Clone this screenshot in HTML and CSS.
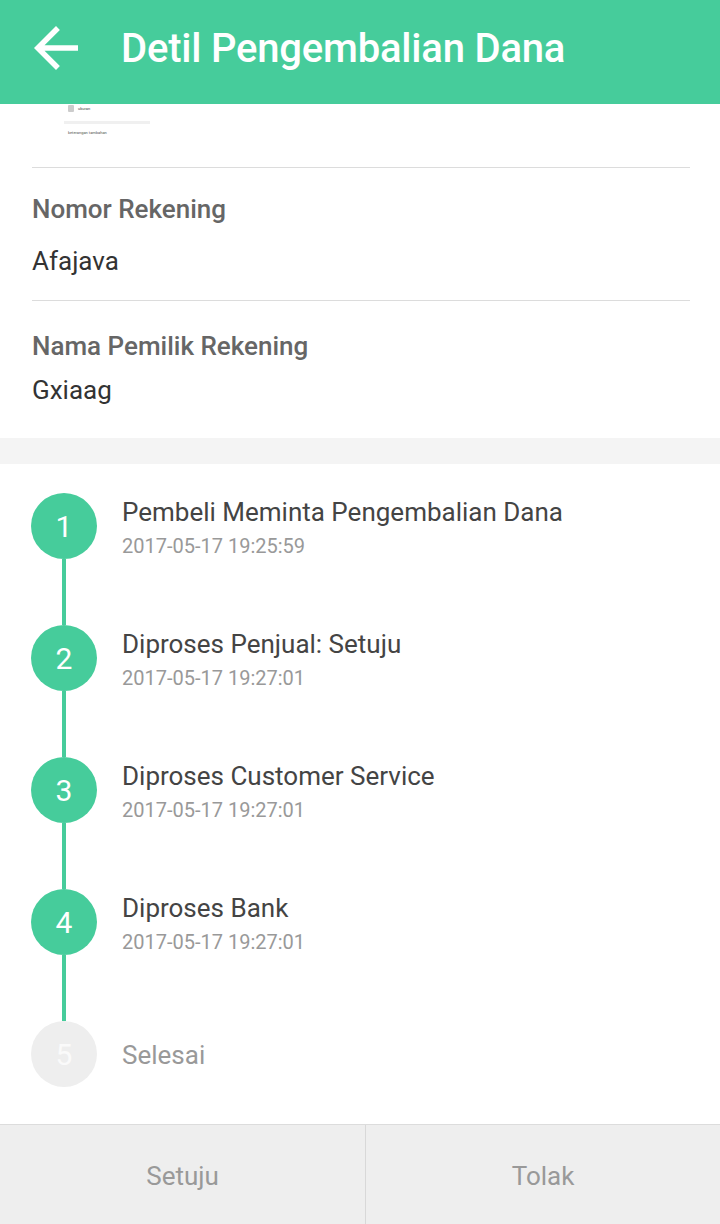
FILE: index.html
```html
<!DOCTYPE html>
<html lang="id">
<head>
<meta charset="utf-8">
<link rel="stylesheet" href="styles.css">
</head>
<body>
<div class="page">
  <header class="appbar">
    <svg class="back" viewBox="0 0 24 24" width="66" height="66"><path fill="#fff" d="M20 11H7.83l5.59-5.59L12 4l-8 8 8 8 1.41-1.41L7.83 13H20v-2z"/></svg>
    <h1 class="title">Detil Pengembalian Dana</h1>
  </header>

  <section class="info">
    <div class="thumb">
      <div class="thumb-row"><span class="thumb-sq"></span><span class="thumb-txt">ukuran</span></div>
      <div class="thumb-line"></div>
      <div class="thumb-small">keterangan tambahan</div>
    </div>
    <div class="field">
      <div class="label">Nomor Rekening</div>
      <div class="value">Afajava</div>
    </div>
    <div class="field last">
      <div class="label">Nama Pemilik Rekening</div>
      <div class="value">Gxiaag</div>
    </div>
  </section>

  <div class="band"></div>

  <section class="timeline">
    <div class="step">
      <div class="dot">1</div>
      <div class="text"><div class="step-title">Pembeli Meminta Pengembalian Dana</div><div class="step-date">2017-05-17 19:25:59</div></div>
    </div>
    <div class="connector"></div>
    <div class="step">
      <div class="dot">2</div>
      <div class="text"><div class="step-title">Diproses Penjual: Setuju</div><div class="step-date">2017-05-17 19:27:01</div></div>
    </div>
    <div class="connector"></div>
    <div class="step">
      <div class="dot">3</div>
      <div class="text"><div class="step-title">Diproses Customer Service</div><div class="step-date">2017-05-17 19:27:01</div></div>
    </div>
    <div class="connector"></div>
    <div class="step">
      <div class="dot">4</div>
      <div class="text"><div class="step-title">Diproses Bank</div><div class="step-date">2017-05-17 19:27:01</div></div>
    </div>
    <div class="connector"></div>
    <div class="step pending">
      <div class="dot">5</div>
      <div class="text"><div class="step-title">Selesai</div></div>
    </div>
  </section>

  <footer class="actions">
    <div class="btn first">Setuju</div>
    <div class="btn">Tolak</div>
  </footer>
</div>
</body>
</html>
```

FILE: styles.css
```css
* { box-sizing: border-box; }
html, body { margin: 0; padding: 0; }
body {
  width: 720px;
  height: 1224px;
  overflow: hidden;
  background: #fff;
  font-family: Roboto, "Noto Sans", sans-serif;
}
.page {
  display: flex;
  flex-direction: column;
  height: 1224px;
}
.appbar {
  height: 104px;
  background: #46cc9b;
  display: flex;
  align-items: center;
  flex-shrink: 0;
}
.back {
  margin-left: 23px;
  margin-top: -8px;
  flex-shrink: 0;
}
.title {
  margin: -8px 0 0 32px;
  color: #fff;
  font-size: 40px;
  font-weight: 500;
  letter-spacing: -0.2px;
}
.info {
  padding: 0 30px 0 32px;
}
.thumb {
  height: 63px;
  padding: 0 0 0 32px;
  display: flex;
  flex-direction: column;
}
.thumb-row {
  display: flex;
  align-items: center;
  gap: 4px;
  height: 9px;
  margin-left: 4px;
}
.thumb-sq {
  width: 6px;
  height: 7px;
  background: #ccc;
  border-radius: 1px;
}
.thumb-txt {
  font-size: 4px;
  color: #444;
}
.thumb-line {
  width: 86px;
  height: 3px;
  background: #f0f0f0;
  margin-top: 8px;
}
.thumb-small {
  font-size: 4px;
  color: #555;
  margin-top: 6px;
  margin-left: 4px;
}
.field {
  border-top: 1px solid #dcdcdc;
  height: 133px;
  padding-top: 25px;
}
.field.last {
  height: 138px;
  padding-top: 29px;
}
.label {
  font-size: 26px;
  font-weight: 500;
  color: #666;
  line-height: 32px;
}
.value {
  font-size: 26px;
  color: #333;
  line-height: 32px;
  margin-top: 20px;
}
.field.last .value { margin-top: 12px; }
.band {
  height: 26px;
  background: #f4f4f4;
  flex-shrink: 0;
}
.timeline {
  flex: 1;
  padding: 29px 0 0 31px;
}
.step {
  display: flex;
  align-items: center;
  height: 66px;
}
.dot {
  width: 66px;
  height: 66px;
  border-radius: 50%;
  background: #46cc9b;
  color: #fff;
  font-size: 30px;
  display: flex;
  align-items: center;
  justify-content: center;
  flex-shrink: 0;
}
.pending .dot {
  background: #eeeeee;
  color: #fafafa;
}
.text {
  margin-left: 25px;
  padding-top: 2px;
}
.step-title {
  font-size: 26px;
  color: #444;
  line-height: 32px;
}
.step-date {
  font-size: 20px;
  color: #999;
  line-height: 24px;
  margin-top: 6px;
}
.pending .step-title { color: #999; }
.connector {
  width: 4px;
  height: 66px;
  margin-left: 31px;
  background: #46cc9b;
}
.actions {
  height: 100px;
  display: flex;
  background: #eeeeee;
  border-top: 1px solid #dcdcdc;
  flex-shrink: 0;
}
.btn {
  flex: 1;
  display: flex;
  align-items: center;
  justify-content: center;
  font-size: 26px;
  color: #999;
  padding-top: 2px;
}
.btn.first {
  flex: 0 0 366px;
  border-right: 1px solid #d8d8d8;
}
```
